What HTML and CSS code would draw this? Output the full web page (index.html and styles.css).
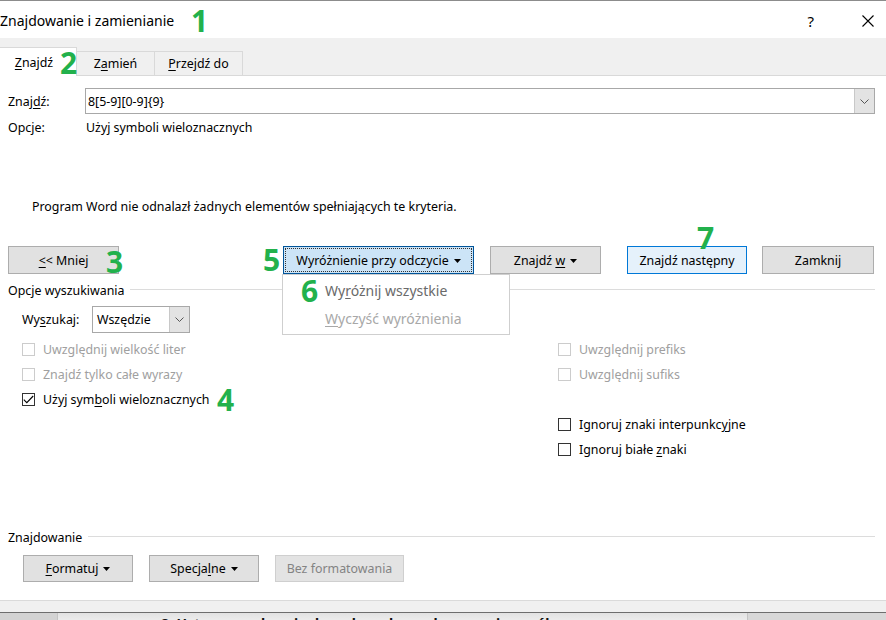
FILE: index.html
```html
<!DOCTYPE html>
<html lang="pl">
<head>
<meta charset="utf-8">
<title>Znajdowanie i zamienianie</title>
<link rel="stylesheet" href="styles.css">
</head>
<body>
<div class="dialog">
  <div class="titlebar">
    <div class="title">Znajdowanie i zamienianie</div>
    <div class="title-buttons">
      <span class="help">?</span>
      <svg class="close" width="12" height="12" viewBox="0 0 12 12"><path d="M0.5 0.5 L11.5 11.5 M11.5 0.5 L0.5 11.5" stroke="#000" stroke-width="1.1" fill="none"/></svg>
    </div>
  </div>

  <div class="tabs">
    <div class="tab active"><span><u>Z</u>najdź</span></div>
    <div class="tab"><span>Z<u>a</u>mień</span></div>
    <div class="tab wide"><span><u>P</u>rzejdź do</span></div>
  </div>

  <div class="content">
    <div class="find-row">
      <label class="find-label">Znaj<u>d</u>ź:</label>
      <div class="combo">
        <span class="combo-text">8[5-9][0-9]{9}</span>
        <span class="combo-btn"><svg width="9" height="5" viewBox="0 0 9 5"><path d="M0.5 0.5 L4.5 4.5 L8.5 0.5" stroke="#555" stroke-width="1" fill="none"/></svg></span>
      </div>
    </div>
    <div class="opts-row">
      <span class="opts-label">Opcje:</span>
      <span>Użyj symboli wieloznacznych</span>
    </div>

    <div class="message">Program Word nie odnalazł żadnych elementów spełniających te kryteria.</div>

    <div class="button-row">
      <button class="btn btn-less"><span><u>&lt;</u>&lt; Mniej</span></button>
      <div class="menu-wrap">
        <button class="btn btn-reading"><span>Wyróżnienie przy odczycie</span><svg class="tri" width="7" height="4" viewBox="0 0 7 4"><path d="M0 0 H7 L3.5 4 Z" fill="#000"/></svg></button>
        <div class="menu">
          <div class="menu-item">Wy<u>r</u>óżnij wszystkie</div>
          <div class="menu-item disabled"><u>W</u>yczyść wyróżnienia</div>
        </div>
      </div>
      <button class="btn btn-findin"><span>Znajdź <u>w</u></span><svg class="tri" width="7" height="4" viewBox="0 0 7 4"><path d="M0 0 H7 L3.5 4 Z" fill="#000"/></svg></button>
      <button class="btn btn-next"><span>Znajdź następny</span></button>
      <button class="btn btn-close"><span>Zamknij</span></button>
    </div>

    <div class="group-head"><span>Opcje wyszukiwania</span><span class="group-line"></span></div>

    <div class="search-row">
      <span class="search-label">Wy<u>s</u>zukaj:</span>
      <div class="select">
        <span class="select-text">Wszędzie</span>
        <span class="select-btn"><svg width="9" height="5" viewBox="0 0 9 5"><path d="M0.5 0.5 L4.5 4.5 L8.5 0.5" stroke="#555" stroke-width="1" fill="none"/></svg></span>
      </div>
    </div>

    <div class="options">
      <div class="check disabled c1"><span class="box"></span><span>Uwzględnij wielkość liter</span></div>
      <div class="check disabled c1"><span class="box"></span><span>Znajdź tylko całe wyrazy</span></div>
      <div class="check c1"><span class="box"><svg width="11" height="9" viewBox="0 0 11 9"><path d="M0.8 4.6 L3.8 7.6 L10.2 1" stroke="#000" stroke-width="1.1" fill="none"/></svg></span><span>Użyj sym<u>b</u>oli wieloznacznych</span></div>
      <div class="check disabled c2 r1"><span class="box"></span><span>Uwzględnij prefiks</span></div>
      <div class="check disabled c2 r2"><span class="box"></span><span>Uwzględnij sufiks</span></div>
      <div class="check c2 r4"><span class="box"></span><span>Ignoruj znaki interpunkc<u>y</u>jne</span></div>
      <div class="check c2 r5"><span class="box"></span><span>Ignoruj białe <u>z</u>naki</span></div>
    </div>

    <div class="group-head group-find"><span>Znajdowanie</span><span class="group-line"></span></div>

    <div class="bottom-buttons">
      <button class="btn btn-format"><span><u>F</u>ormatuj</span><svg class="tri" width="7" height="4" viewBox="0 0 7 4"><path d="M0 0 H7 L3.5 4 Z" fill="#000"/></svg></button>
      <button class="btn btn-special"><span>Specja<u>l</u>ne</span><svg class="tri" width="7" height="4" viewBox="0 0 7 4"><path d="M0 0 H7 L3.5 4 Z" fill="#000"/></svg></button>
      <button class="btn btn-noformat" disabled><span>Bez formatowania</span></button>
    </div>
  </div>

  <div class="footer"></div>
  <div class="doc-strip">
    <div class="seg seg-left"></div>
    <div class="seg seg-mid"><span class="doc-text">8. Ustawa o ochronie danych osobowych – przepisy ogólne</span></div>
    <div class="seg seg-right"></div>
  </div>

  <span class="mark m1">1</span>
  <span class="mark m2">2</span>
  <span class="mark m3">3</span>
  <span class="mark m4">4</span>
  <span class="mark m5">5</span>
  <span class="mark m6">6</span>
  <span class="mark m7">7</span>
</div>
</body>
</html>
```

FILE: styles.css
```css
* { box-sizing: border-box; }

html, body {
  margin: 0;
  padding: 0;
}

body {
  width: 886px;
  height: 620px;
  overflow: hidden;
  background: #fff;
  font-family: "Noto Sans", "Open Sans", sans-serif;
  font-size: 12.4px;
  color: #000;
}

u { text-decoration: underline; text-underline-offset: 2px; text-decoration-thickness: 1px; }

.dialog {
  position: relative;
  height: 620px;
  display: flex;
  flex-direction: column;
  border-top: 1px solid #8c8c8c;
}

/* title bar */
.titlebar {
  height: 37px;
  flex: none;
  display: flex;
  align-items: center;
  justify-content: space-between;
  background: #fff;
}
.title {
  font-size: 14px;
  margin-left: 0;
  margin-top: 1px;
}
.title-buttons {
  display: flex;
  align-items: center;
  margin-right: 12px;
  margin-top: 2px;
}
.help {
  font-size: 15px;
  margin-right: 48px;
}

/* tabs */
.tabs {
  height: 38px;
  flex: none;
  background: #f0f0f0;
  border-bottom: 1px solid #d9d9d9;
  display: flex;
  align-items: flex-end;
}
.tab {
  height: 24px;
  width: 78px;
  border-top: 1px solid #d9d9d9;
  border-right: 1px solid #d9d9d9;
  background: #f0f0f0;
  display: flex;
  align-items: center;
  justify-content: center;
}
.tab.wide { width: 88px; }
.tab.active {
  width: 77px;
  height: 29px;
  background: #fff;
  margin-bottom: -1px;
  padding-top: 1px;
  padding-right: 8px;
}

/* content */
.content {
  flex: 1;
  padding: 0 11px 0 8px;
}

.find-row {
  display: flex;
  align-items: center;
  margin-top: 12px;
  height: 26px;
}
.find-label { width: 77px; }
.combo {
  flex: 1;
  height: 26px;
  border: 1px solid #a8a8a8;
  display: flex;
  align-items: stretch;
}
.combo-text {
  flex: 1;
  padding-left: 2px;
  display: flex;
  align-items: center;
}
.combo-btn {
  width: 20px;
  background: #e3e3e3;
  border-left: 1px solid #c8c8c8;
  display: flex;
  align-items: center;
  justify-content: center;
}

.opts-row {
  display: flex;
  height: 18px;
  align-items: center;
  margin-top: 4px;
}
.opts-label { width: 78px; }

.message {
  margin-top: 62px;
  height: 18px;
  line-height: 18px;
  padding-left: 24px;
}

/* buttons */
.btn {
  font-family: inherit;
  font-size: 12.4px;
  color: #000;
  height: 28px;
  background: #e1e1e1;
  border: 1px solid #adadad;
  padding: 0;
  margin: 0;
  display: inline-flex;
  align-items: center;
  justify-content: center;
  gap: 5px;
}
.btn .tri { margin-top: 1px; }

.button-row {
  display: flex;
  align-items: flex-start;
  margin-top: 30px;
  height: 28px;
}
.btn-less { width: 111px; }
.menu-wrap {
  position: relative;
  margin-left: 164px;
}
.btn-reading {
  width: 191px;
  background: #cce4f7;
  border: 1px solid #005499;
  outline: 1px dotted #333;
  outline-offset: -3px;
}
.menu {
  position: absolute;
  left: -1px;
  top: 28px;
  width: 228px;
  height: 61px;
  background: #fff;
  border: 1px solid #cfcfcf;
  padding-top: 2px;
}
.menu-item {
  height: 28px;
  line-height: 28px;
  padding-left: 42px;
  font-size: 14px;
  color: #6a6a6a;
}
.menu-item.disabled { color: #a8a8a8; }

.btn-findin { width: 111px; margin-left: 16px; }
.btn-next {
  width: 120px;
  margin-left: 26px;
  background: #e5f1fb;
  border-color: #0078d7;
}
.btn-close { width: 112px; margin-left: 15px; }

/* groups */
.group-head {
  display: flex;
  align-items: center;
  height: 18px;
  margin-top: 7px;
}
.group-line {
  flex: 1;
  height: 1px;
  background: #dcdcdc;
  margin-left: 6px;
  margin-top: -2px;
}

.search-row {
  display: flex;
  align-items: center;
  margin-top: 7px;
  height: 27px;
  padding-left: 14px;
}
.search-label { width: 70px; }
.select {
  width: 98px;
  height: 27px;
  border: 1px solid #a8a8a8;
  display: flex;
  align-items: stretch;
}
.select-text {
  flex: 1;
  padding-left: 4px;
  display: flex;
  align-items: center;
}
.select-btn {
  width: 20px;
  background: #e3e3e3;
  border-left: 1px solid #c8c8c8;
  display: flex;
  align-items: center;
  justify-content: center;
}

.options {
  display: grid;
  grid-template-columns: 536px 1fr;
  grid-auto-rows: 25px;
  margin-top: 4px;
  padding-left: 14px;
}
.check {
  display: flex;
  align-items: center;
  gap: 8px;
}
.check.c1 { grid-column: 1; }
.check.c2 { grid-column: 2; }
.r1 { grid-row: 1; }
.r2 { grid-row: 2; }
.r4 { grid-row: 4; }
.r5 { grid-row: 5; }
.box {
  width: 13px;
  height: 13px;
  border: 1px solid #333;
  background: #fff;
  display: flex;
  align-items: center;
  justify-content: center;
  flex: none;
}
.check.disabled { color: #a0a0a0; }
.check.disabled .box { border-color: #cccccc; }

.group-find { margin-top: 66px; }

.bottom-buttons {
  display: flex;
  margin-top: 9px;
  padding-left: 15px;
  gap: 17px;
}
.bottom-buttons .btn { height: 27px; }
.btn-format { width: 110px; }
.btn-special { width: 110px; margin-left: -1px; }
.btn-noformat {
  width: 129px;
  margin-left: -1px;
  color: #838383;
  background: #e3e3e3;
  border-color: #cfcfcf;
}

/* footer */
.footer {
  flex: none;
  height: 13px;
  background: #f0f0f0;
  border-top: 1px solid #dadada;
  border-bottom: 1px solid #6e6e6e;
}
.doc-strip {
  flex: none;
  height: 7px;
  display: flex;
  overflow: hidden;
}
.seg { height: 7px; }
.seg-left { width: 57px; background: #d3d3d3; }
.seg-mid {
  width: 691px;
  background: linear-gradient(#e2e2e2, #ececec);
  border-left: 1px solid #c4c4c4;
  border-right: 1px solid #c4c4c4;
  overflow: hidden;
  padding-left: 103px;
}
.seg-right { flex: 1; background: #d8d8d8; }
.doc-text {
  display: block;
  font-size: 14px;
  font-weight: bold;
  line-height: 14px;
  margin-top: 4px;
  white-space: nowrap;
  color: #111;
}

/* annotation numbers */
.mark {
  position: absolute;
  font-family: "Noto Sans", sans-serif;
  font-weight: bold;
  font-size: 30px;
  line-height: 22px;
  color: #22b14c;
}
.m1 { left: 191px; top: 9px; }
.m2 { left: 60px; top: 51px; }
.m3 { left: 106px; top: 250px; }
.m4 { left: 217px; top: 388px; }
.m5 { left: 263px; top: 248px; }
.m6 { left: 301px; top: 279px; }
.m7 { left: 697px; top: 226px; }
```
